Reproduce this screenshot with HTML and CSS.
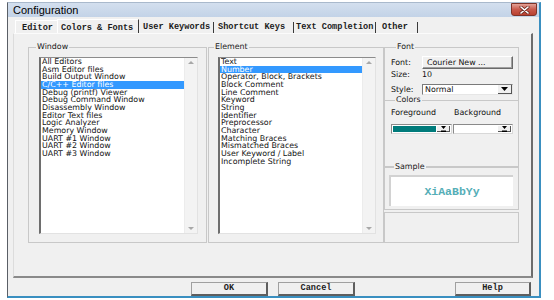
FILE: index.html
```html
<!DOCTYPE html>
<html lang="en">
<head>
	<meta charset="UTF-8">
	<title>Configuration</title>
	<link rel="stylesheet" href="styles.css">
</head>
<body>
	<!-- dialog window -->
	<div class="win">
		<div class="titlebar">
			<span class="title">Configuration</span>
			<span class="close">
				<svg width="11" height="8" viewBox="0 0 11 8"><path d="M2 1 L9 7 M9 1 L2 7" stroke="#6a2a22" stroke-width="3" stroke-linecap="round"/><path d="M2 1 L9 7 M9 1 L2 7" stroke="#fff" stroke-width="1.6" stroke-linecap="round"/></svg>
			</span>
		</div>

		<div class="client">
			<!-- tabs -->
			<div class="tabs">
				<span class="tab t-editor">Editor</span>
				<span class="tab t-colors on">Colors &amp; Fonts</span>
				<span class="tab t-user">User Keywords</span>
				<span class="tab t-short">Shortcut Keys</span>
				<span class="tab t-text">Text Completion</span>
				<span class="tab t-other">Other</span>
			</div>

			<!-- tab page -->
			<div class="panel">
				<div class="group g-window">
					<span class="legend">Window</span>
					<div class="listbox">
						<ul class="items">
							<li>All Editors</li>
							<li>Asm Editor files</li>
							<li>Build Output Window</li>
							<li class="sel">C/C++ Editor files</li>
							<li>Debug (printf) Viewer</li>
							<li>Debug Command Window</li>
							<li>Disassembly Window</li>
							<li>Editor Text files</li>
							<li>Logic Analyzer</li>
							<li>Memory Window</li>
							<li>UART #1 Window</li>
							<li>UART #2 Window</li>
							<li>UART #3 Window</li>
						</ul>
						<div class="vscroll"><i class="up"></i><i class="down"></i></div>
					</div>
				</div>

				<div class="group g-element">
					<span class="legend">Element</span>
					<div class="listbox">
						<ul class="items">
							<li>Text</li>
							<li class="sel">Number</li>
							<li>Operator, Block, Brackets</li>
							<li>Block Comment</li>
							<li>Line Comment</li>
							<li>Keyword</li>
							<li>String</li>
							<li>Identifier</li>
							<li>Preprocessor</li>
							<li>Character</li>
							<li>Matching Braces</li>
							<li>Mismatched Braces</li>
							<li>User Keyword / Label</li>
							<li>Incomplete String</li>
						</ul>
						<div class="vscroll"><i class="up"></i><i class="down"></i></div>
					</div>
				</div>

				<div class="side">
					<div class="group g-font">
						<span class="legend">Font</span>
						<div class="frow r-font">
							<span class="lbl">Font:</span>
							<span class="btn-font">Courier New ...</span>
						</div>
						<div class="frow r-size">
							<span class="lbl">Size:</span>
							<span>10</span>
						</div>
						<div class="frow r-style">
							<span class="lbl">Style:</span>
							<span class="combo">
								<span class="combo-val">Normal</span>
								<span class="combo-btn"><svg width="7" height="4" viewBox="0 0 7 4"><path d="M0 0 H7 L3.5 4 Z" fill="#000"/></svg></span>
							</span>
						</div>
					</div>

					<div class="group g-colors">
						<span class="legend">Colors</span>
						<div class="crow">
							<span class="clbl">Foreground</span>
							<span class="clbl">Background</span>
						</div>
						<div class="crow swatches">
							<span class="swatch fg">
								<span class="fill"></span>
								<span class="drop"><svg width="5" height="6" viewBox="0 0 5 6"><path d="M0 0 H5 L2.5 3 Z M0 4.5 H5 V6 H0 Z" fill="#000"/></svg></span>
							</span>
							<span class="swatch bg">
								<span class="fill"></span>
								<span class="drop"><svg width="5" height="6" viewBox="0 0 5 6"><path d="M0 0 H5 L2.5 3 Z M0 4.5 H5 V6 H0 Z" fill="#000"/></svg></span>
							</span>
						</div>
					</div>

					<div class="group g-sample">
						<span class="legend">Sample</span>
						<div class="sample">XiAaBbYy</div>
					</div>

					<div class="group g-empty"></div>
				</div>
			</div>

			<!-- dialog buttons -->
			<div class="buttons">
				<span class="btn b-ok">OK</span>
				<span class="btn b-cancel">Cancel</span>
				<span class="btn b-help">Help</span>
			</div>
		</div>
	</div>
</body>
</html>
```

FILE: styles.css
```css
html,body,ul{
	margin: 0;
	padding: 0;
}
body{
	background: #fff;
	font-family: "DejaVu Sans", Verdana, sans-serif;
	color: #111;
}
ul{
	list-style: none;
}

/* window frame */
.win{
	box-sizing: border-box;
	width: 534px;
	height: 296px;
	margin: 2px 0 0 7px;
	border-top: 1px solid #a9b9cc;
	border-left: 1px solid #5a5f66;
	border-right: 2px solid #3a8fc0;
	border-bottom: 2px solid #3a8fc0;
	background: #f0f0f0;
}
.titlebar{
	display: flex;
	justify-content: space-between;
	align-items: flex-start;
	height: 14px;
	padding: 0 2px 0 5px;
	background: linear-gradient(#d3dfee, #c3d3e7);
}
.title{
	font: 11px "Liberation Sans", Arial, sans-serif;
	line-height: 14px;
	color: #000;
}
.close{
	display: flex;
	align-items: center;
	justify-content: center;
	box-sizing: border-box;
	width: 26px;
	height: 13px;
	border: 1px solid #7e3328;
	border-radius: 0 0 3px 3px;
	background: linear-gradient(#e3a196, #c9594b 50%, #b9402f);
}

/* client area */
.client{
	height: 279px;
	background: #f0f0f0;
}

/* tabs */
.tabs{
	display: flex;
	align-items: flex-end;
	height: 16px;
	padding-left: 7px;
	font: bold 8.6px "Liberation Mono", "Courier New", monospace;
	color: #1c1c1c;
}
.tab{
	box-sizing: border-box;
	height: 11px;
	line-height: 10px;
	padding-left: 4px;
	white-space: nowrap;
	border-right: 1px solid #3a3a3a;
}
.t-editor{ width: 42px; padding-left: 6px; height: 13px; line-height: 14px; border-right: 0; border-top: 1px solid #fff; border-left: 1px solid #fff; }
.t-colors{ width: 82px; padding-left: 3px; height: 14px; line-height: 16px; border-left: 1px solid #fff; border-top: 1px solid #fff; }
.t-user{ width: 75px; }
.t-short{ width: 80px; }
.t-text{ width: 82px; padding-left: 2px; }
.t-other{ width: 42px; padding-left: 6px; }

/* tab page */
.panel{
	display: flex;
	align-items: flex-start;
	box-sizing: border-box;
	width: 520px;
	height: 245px;
	margin-left: 5px;
	padding: 13px 0 0 14px;
	border-top: 1px solid #fbfbfb;
	border-left: 1px solid #dcdcdc;
	border-right: 2px solid #6c6c6c;
	border-bottom: 2px solid #8a8a8a;
}

/* group box */
.group{
	box-sizing: border-box;
	border: 1px solid #c8c8c8;
	font-size: 7.9px;
}
.legend{
	display: block;
	width: fit-content;
	height: 10px;
	line-height: 10px;
	margin: -6px 0 0 7px;
	padding: 0 1px;
	background: #f0f0f0;
	color: #1a1a1a;
}
.g-window{
	width: 179px;
	height: 196px;
	margin-right: 1px;
}
.g-element{
	width: 176px;
	height: 196px;
}
.g-element .legend{ margin-left: 5px; }

/* list box */
.listbox{
	display: flex;
	box-sizing: border-box;
	width: 159px;
	height: 177px;
	margin: 5px 0 0 10px;
	background: #fff;
	border-top: 1px solid #8c8c8c;
	border-left: 2px solid #6e6e6e;
	border-right: 1px solid #e2e2e2;
	border-bottom: 1px solid #e2e2e2;
}
.g-element .listbox{
	width: 158px;
	margin-left: 9px;
}
.items{
	flex: 1;
	font-size: 7.9px;
	line-height: 7.67px;
	color: #141414;
}
.items li{
	height: 7.67px;
	padding-left: 1px;
	white-space: nowrap;
}
.items li.sel{
	background: #3399ff;
	color: #fff;
}
.vscroll{
	display: flex;
	flex-direction: column;
	justify-content: space-between;
	align-items: center;
	width: 13px;
	padding: 3px 0;
	box-sizing: border-box;
	background: #f3f3f3;
	border-left: 1px solid #ececec;
}
.vscroll i{
	width: 0;
	height: 0;
	border-left: 3px solid transparent;
	border-right: 3px solid transparent;
}
.vscroll .up{ border-bottom: 3px solid #a8a8a8; }
.vscroll .down{ border-top: 3px solid #a8a8a8; }

/* right column */
.side{
	display: flex;
	flex-direction: column;
	width: 135px;
}
.g-font{
	height: 54px;
	padding-left: 6px;
}
.g-font .legend{ margin-left: 5px; }
.frow{
	display: flex;
	align-items: center;
}
.lbl{
	width: 31px;
}
.r-font{ height: 13px; margin-top: 4px; }
.r-size{ height: 10px; }
.r-style{ height: 11px; margin-top: 5px; }
.btn-font{
	box-sizing: border-box;
	width: 91px;
	height: 13px;
	line-height: 11px;
	padding-left: 4px;
	background: #f0f0f0;
	border-top: 1px solid #fff;
	border-left: 1px solid #fff;
	border-right: 1px solid #6a6a6a;
	border-bottom: 1px solid #6a6a6a;
	box-shadow: inset -1px -1px 0 #a0a0a0;
}
.combo{
	display: flex;
	box-sizing: border-box;
	width: 91px;
	height: 11px;
	background: #fff;
	border-top: 1px solid #7a7a7a;
	border-left: 1px solid #7a7a7a;
	border-right: 1px solid #e6e6e6;
	border-bottom: 1px solid #e6e6e6;
}
.combo-val{
	flex: 1;
	line-height: 9px;
	padding-left: 2px;
}
.combo-btn{
	display: flex;
	align-items: center;
	justify-content: center;
	box-sizing: border-box;
	width: 14px;
	background: #f0f0f0;
	border-right: 1px solid #555;
	border-bottom: 1px solid #555;
}

.g-colors{
	height: 67px;
	margin-top: -1px;
	padding-left: 6px;
}
.g-colors .legend{ margin-left: 4px; }
.crow{
	display: flex;
	height: 11px;
	margin-top: 2px;
	align-items: center;
}
.clbl{
	width: 63px;
}
.crow.swatches{
	height: 10px;
	margin-top: 6px;
	gap: 1px;
}
.swatch{
	display: flex;
	box-sizing: border-box;
	height: 10px;
	padding: 1px;
	background: #fff;
	border-top: 1px solid #8a8a8a;
	border-left: 1px solid #8a8a8a;
	border-right: 1px solid #d8d8d8;
	border-bottom: 1px solid #d8d8d8;
}
.swatch.fg{ width: 61px; }
.swatch.bg{ width: 60px; }
.swatch .fill{ flex: 1; }
.swatch.fg .fill{ background: #007b7b; }
.drop{
	display: flex;
	align-items: center;
	justify-content: center;
	box-sizing: border-box;
	width: 13px;
	margin-left: 1px;
	background: #f0f0f0;
	border-right: 1px solid #555;
	border-bottom: 1px solid #555;
}

.g-sample{
	height: 43px;
	padding-left: 4px;
}
.g-sample .legend{ margin-left: 5px; }
.sample{
	box-sizing: border-box;
	width: 124px;
	height: 31px;
	margin-top: 3px;
	background: #fff;
	border-top: 2px solid #d2d2d2;
	border-left: 2px solid #d2d2d2;
	font: bold 11.5px "Liberation Mono", "Courier New", monospace;
	line-height: 29px;
	text-align: center;
	color: #55aeb7;
}
.g-empty{
	height: 31px;
	margin-top: 2px;
}

/* OK / Cancel / Help */
.buttons{
	display: flex;
	height: 14px;
	margin-top: 4px;
	padding: 0 8px 0 183px;
	font: bold 8.6px "Liberation Mono", "Courier New", monospace;
	color: #1c1c1c;
}
.btn{
	box-sizing: border-box;
	width: 77px;
	height: 14px;
	line-height: 11px;
	text-align: center;
	background: #f0f0f0;
	border-top: 1px solid #a0a0a0;
	border-left: 1px solid #a0a0a0;
	border-right: 2px solid #5e5e5e;
	border-bottom: 2px solid #5e5e5e;
}
.b-cancel{ margin-left: 10px; }
.b-help{ margin-left: auto; width: 76px; }
```
